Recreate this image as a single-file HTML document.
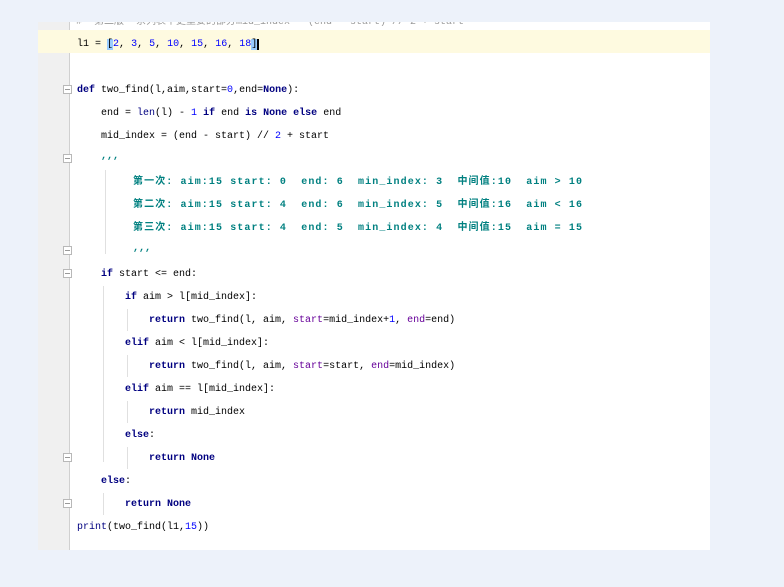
<!DOCTYPE html>
<html><head><meta charset="utf-8"><style>
body{margin:0;width:784px;height:587px;background:#edf2fa;position:relative;overflow:hidden;font-family:"Liberation Mono","Noto Sans CJK SC",monospace;font-size:10px;}
#ed{position:absolute;left:38px;top:22px;width:672px;height:528px;background:#fff;overflow:hidden;}
#gut{position:absolute;left:0;top:0;width:31px;height:528px;background:#f0f0f0;border-right:1px solid #d0d0d0;}
.cur{position:absolute;left:0;top:8px;width:672px;height:23px;background:#fefae0;}
.ln{position:absolute;white-space:pre;line-height:14px;color:#000;}
.k{color:#000080;font-weight:bold}
.n{color:#0000ff}
.p{color:#660099}
.d{color:#008080;font-weight:bold}
.ds{letter-spacing:1.1px}
.g{position:absolute;width:1px;background:#e0e0e0;}
.f{position:absolute;left:25px;width:9px;height:9px;border:1px solid #b8b8b8;background:#fff;box-sizing:border-box;}
.f:after{content:"";position:absolute;left:1px;top:3px;width:5px;height:1px;background:#999;}
</style></head><body>
<div id="ed">
<div id="gut"></div>
<div class="cur"></div>
<div class="ln" style="left:38px;top:-6px;color:#999">#  第二版  系列表中更重要的部分mid_index   (end - start) // 2 + start</div>
<div class="ln" style="left:39px;top:16px">l1 = <span style="background:#99ccff">[</span><span class="n">2</span>, <span class="n">3</span>, <span class="n">5</span>, <span class="n">10</span>, <span class="n">15</span>, <span class="n">16</span>, <span class="n">18</span><span style="background:#99ccff">]</span><span style="border-left:2px solid #000"></span></div>
<div class="f" style="top:63px"></div>
<div class="ln" style="left:39px;top:62px"><span class="k">def</span> two_find(l,aim,start=<span class="n">0</span>,end=<span class="k">None</span>):</div>
<div class="ln" style="left:63px;top:85px">end = <span class="k" style="font-weight:normal">len</span>(l) - <span class="n">1</span> <span class="k">if</span> end <span class="k">is</span> <span class="k">None</span> <span class="k">else</span> end</div>
<div class="ln" style="left:63px;top:108px">mid_index = (end - start) // <span class="n">2</span> + start</div>
<div class="f" style="top:132px"></div>
<div class="ln d" style="left:63px;top:128px">,,,</div>
<div class="g" style="left:67px;top:148px;height:84px"></div>
<div class="ln d ds" style="left:95px;top:154px">第一次: aim:15 start: 0  end: 6  min_index: 3  中间值:10  aim > 10</div>
<div class="ln d ds" style="left:95px;top:177px">第二次: aim:15 start: 4  end: 6  min_index: 5  中间值:16  aim < 16</div>
<div class="ln d ds" style="left:95px;top:200px">第三次: aim:15 start: 4  end: 5  min_index: 4  中间值:15  aim = 15</div>
<div class="f" style="top:224px"></div>
<div class="ln d" style="left:95px;top:220px">,,,</div>
<div class="f" style="top:247px"></div>
<div class="ln" style="left:63px;top:246px"><span class="k">if</span> start &lt;= end:</div>
<div class="g" style="left:65px;top:264px;height:176px"></div>
<div class="ln" style="left:87px;top:269px"><span class="k">if</span> aim &gt; l[mid_index]:</div>
<div class="g" style="left:89px;top:287px;height:22px"></div>
<div class="ln" style="left:111px;top:292px"><span class="k">return</span> two_find(l, aim, <span class="p">start</span>=mid_index+<span class="n">1</span>, <span class="p">end</span>=end)</div>
<div class="ln" style="left:87px;top:315px"><span class="k">elif</span> aim &lt; l[mid_index]:</div>
<div class="g" style="left:89px;top:333px;height:22px"></div>
<div class="ln" style="left:111px;top:338px"><span class="k">return</span> two_find(l, aim, <span class="p">start</span>=start, <span class="p">end</span>=mid_index)</div>
<div class="ln" style="left:87px;top:361px"><span class="k">elif</span> aim == l[mid_index]:</div>
<div class="g" style="left:89px;top:379px;height:22px"></div>
<div class="ln" style="left:111px;top:384px"><span class="k">return</span> mid_index</div>
<div class="ln" style="left:87px;top:407px"><span class="k">else</span>:</div>
<div class="g" style="left:89px;top:425px;height:22px"></div>
<div class="f" style="top:431px"></div>
<div class="ln" style="left:111px;top:430px"><span class="k">return</span> <span class="k">None</span></div>
<div class="ln" style="left:63px;top:453px"><span class="k">else</span>:</div>
<div class="g" style="left:65px;top:471px;height:22px"></div>
<div class="f" style="top:477px"></div>
<div class="ln" style="left:87px;top:476px"><span class="k">return</span> <span class="k">None</span></div>
<div class="ln" style="left:39px;top:499px"><span style="color:#000080">print</span>(two_find(l1,<span class="n">15</span>))</div>
</div>
</body></html>
